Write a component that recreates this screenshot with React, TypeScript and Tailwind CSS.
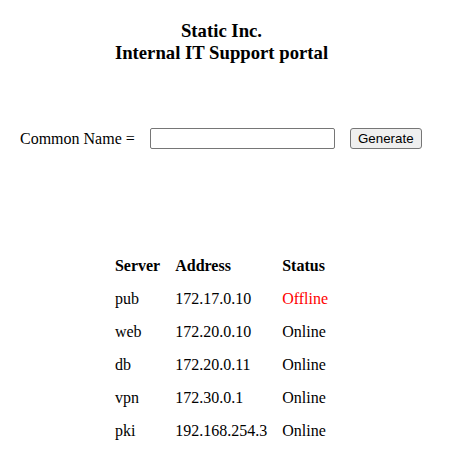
export default function App() {
  const rows = [
    { name: "pub", addr: "172.17.0.10", status: "Offline" },
    { name: "web", addr: "172.20.0.10", status: "Online" },
    { name: "db", addr: "172.20.0.11", status: "Online" },
    { name: "vpn", addr: "172.30.0.1", status: "Online" },
    { name: "pki", addr: "192.168.254.3", status: "Online" },
  ];

  return (
    <div className="w-[443px] h-[470px] bg-white text-black font-['Liberation_Serif',serif] text-[16px]">
      {/* Heading */}
      <h3 className="pt-[20px] text-center text-[18.72px] font-bold leading-[22px]">
        Static Inc.
        <br />
        Internal IT Support portal
      </h3>

      {/* Form */}
      <div className="mt-[64px] ml-[20px] flex items-center h-[21px]">
        <span className="leading-[18px]">Common Name =</span>
        <input
          type="text"
          className="ml-[15px] w-[185px] h-[21px] border border-[#767676] rounded-[2px] px-1 bg-white"
        />
        <button className="ml-[15px] w-[72px] h-[21px] border border-[#767676] rounded-[3px] bg-[#efefef] text-[13.33px] font-['Liberation_Sans',Arial,sans-serif] leading-none">
          Generate
        </button>
      </div>

      {/* Servers */}
      <table className="mt-[100px] mx-auto border-separate border-spacing-0">
        <thead>
          <tr className="h-[33px]">
            <th className="px-[7.5px] text-left font-bold">Server</th>
            <th className="px-[7.5px] text-left font-bold">Address</th>
            <th className="px-[7.5px] text-left font-bold">Status</th>
          </tr>
        </thead>
        <tbody>
          {rows.map((r) => (
            <tr key={r.name} className="h-[33px]">
              <td className="px-[7.5px]">{r.name}</td>
              <td className="px-[7.5px]">{r.addr}</td>
              <td className={r.status === "Offline" ? "px-[7.5px] text-[#ff0000]" : "px-[7.5px]"}>{r.status}</td>
            </tr>
          ))}
        </tbody>
      </table>
    </div>
  );
}
